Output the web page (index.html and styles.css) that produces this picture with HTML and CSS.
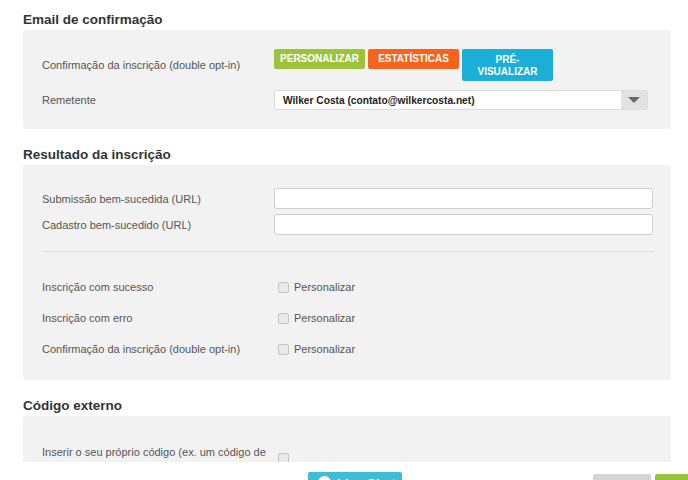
FILE: index.html
```html
<!DOCTYPE html>
<html lang="pt">
<head>
<meta charset="utf-8">
<title>Formulário</title>
<link rel="stylesheet" href="styles.css">
</head>
<body>
<div class="page">
  <div class="content">
    <h2 class="title first">Email de confirmação</h2>
    <section class="panel panel-email">
      <div class="row row-buttons">
        <span class="label">Confirmação da inscrição (double opt-in)</span>
        <div class="btns">
          <button class="btn btn-green">PERSONALIZAR</button>
          <button class="btn btn-orange">ESTATÍSTICAS</button>
          <button class="btn btn-cyan btn-tall">PRÉ-<br>VISUALIZAR</button>
        </div>
      </div>
      <div class="row">
        <span class="label">Remetente</span>
        <div class="select">
          <span class="select-text">Wilker Costa (contato@wilkercosta.net)</span>
          <span class="select-arrow"><span class="tri"></span></span>
        </div>
      </div>
    </section>

    <h2 class="title">Resultado da inscrição</h2>
    <section class="panel panel-result">
      <div class="urls">
        <div class="row">
          <span class="label">Submissão bem-sucedida (URL)</span>
          <input class="text-input" type="text">
        </div>
        <div class="row">
          <span class="label">Cadastro bem-sucedido (URL)</span>
          <input class="text-input" type="text">
        </div>
      </div>
      <hr class="divider">
      <div class="checks">
        <div class="row">
          <span class="label">Inscrição com sucesso</span>
          <label class="check"><input type="checkbox"><span>Personalizar</span></label>
        </div>
        <div class="row">
          <span class="label">Inscrição com erro</span>
          <label class="check"><input type="checkbox"><span>Personalizar</span></label>
        </div>
        <div class="row">
          <span class="label">Confirmação da inscrição (double opt-in)</span>
          <label class="check"><input type="checkbox"><span>Personalizar</span></label>
        </div>
      </div>
    </section>

    <h2 class="title">Código externo</h2>
    <section class="panel panel-code">
      <div class="row">
        <span class="label">Inserir o seu próprio código (ex. um código de tracking)</span>
        <label class="check"><input type="checkbox"></label>
      </div>
    </section>
  </div>
  <footer class="footer">
    <button class="fbtn fbtn-chat"><span class="dot"></span>Live Chat</button>
    <button class="fbtn fbtn-gray">Cancelar</button>
    <button class="fbtn fbtn-green">Salvar</button>
  </footer>
</div>
</body>
</html>
```

FILE: styles.css
```css
* { box-sizing: border-box; }
html, body { margin: 0; padding: 0; background: #fff; }
body {
  font-family: "Liberation Sans", Arial, sans-serif;
  color: #555;
  width: 688px;
  height: 480px;
  overflow: hidden;
}
.page { display: flex; flex-direction: column; height: 480px; overflow: hidden; }
.content {
  height: 462px;
  overflow: hidden;
  padding: 0 17px 0 23px;
  flex: none;
}
.title {
  margin: 17px 0 1px;
  font-size: 13.5px;
  line-height: 18px;
  font-weight: bold;
  color: #333;
}
.title.first { margin-top: 11px; }
.panel {
  background: #f2f2f2;
  border-radius: 3px;
  padding-left: 19px;
}
.row {
  display: grid;
  grid-template-columns: 232px 1fr;
  align-items: center;
}
.label { font-size: 11px; line-height: 14px; color: #555; }

.panel-email { padding-top: 19px; padding-bottom: 19px; display: flex; flex-direction: column; gap: 9px; }
.btns { display: flex; gap: 3px; align-items: flex-start; }
.btn {
  width: 91px;
  height: 20px;
  border: 0;
  border-radius: 2px;
  color: #fff;
  font-family: "Liberation Sans", Arial, sans-serif;
  font-weight: bold;
  font-size: 10px;
  line-height: 12px;
  padding: 0;
  text-align: center;
}
.btn-green { background: #9cc33a; }
.btn-orange { background: #f5631d; }
.btn-cyan { background: #1bafd7; }
.btn-tall { height: 32px; padding-top: 1px; }

.select {
  width: 374px;
  height: 20px;
  background: #fff;
  border: 1px solid #dcdcdc;
  border-radius: 2px;
  display: flex;
  align-items: center;
}
.select-text {
  flex: 1;
  padding-left: 8px;
  font-size: 10.2px;
  font-weight: bold;
  color: #222;
}
.select-arrow {
  width: 26px;
  height: 18px;
  background: #e2e2e2;
  display: flex;
  align-items: center;
  justify-content: center;
}
.tri {
  width: 0; height: 0;
  border-left: 6px solid transparent;
  border-right: 6px solid transparent;
  border-top: 6px solid #6a6a6a;
}

.panel-result { padding-top: 23px; padding-bottom: 21px; }
.urls { display: flex; flex-direction: column; gap: 5px; }
.text-input {
  width: 379px;
  height: 21px;
  border: 1px solid #cfcfcf;
  border-radius: 3px;
  background: #fff;
  margin: 0;
  padding: 0 4px;
}
.divider {
  border: 0;
  border-top: 1px solid #dedede;
  margin: 16px 16px 25px 0;
}
.checks { display: flex; flex-direction: column; gap: 11px; }
.checks .row { height: 20px; }
.check { display: flex; align-items: center; font-size: 11px; color: #555; }
.check input {
  appearance: none;
  -webkit-appearance: none;
  width: 11px;
  height: 11px;
  margin: 0 5px 0 4px;
  border: 1px solid #c6c6c6;
  border-radius: 2px;
  background: #e9e9e9;
}

.panel-code { padding-top: 29px; padding-bottom: 20px; }
.panel-code .row { align-items: start; }
.panel-code .check { padding-top: 8px; }

.footer {
  flex: 1;
  display: flex;
  align-items: flex-start;
  padding-top: 10px;
  overflow: hidden;
  background: #fff;
}
.fbtn {
  border: 0;
  border-radius: 2px;
  height: 30px;
  color: #fff;
  font-family: "Liberation Sans", Arial, sans-serif;
  font-size: 13px;
  font-weight: bold;
  padding: 0;
  display: flex;
  align-items: center;
  flex: none;
}
.fbtn-chat {
  margin-left: 308px;
  width: 94px;
  background: #3fbcd6;
  align-items: flex-start;
  padding: 4px 0 0 10px;
  gap: 6px;
}
.dot { width: 13px; height: 13px; border-radius: 50%; background: #fff; display: block; }
.fbtn-gray { margin-left: 191px; margin-top: 2px; width: 58px; background: #d4d4d4; justify-content: center; padding-top: 14px; }
.fbtn-green { margin-left: 4px; margin-top: 2px; width: 60px; background: #97c23a; justify-content: center; padding-top: 14px; }
```
